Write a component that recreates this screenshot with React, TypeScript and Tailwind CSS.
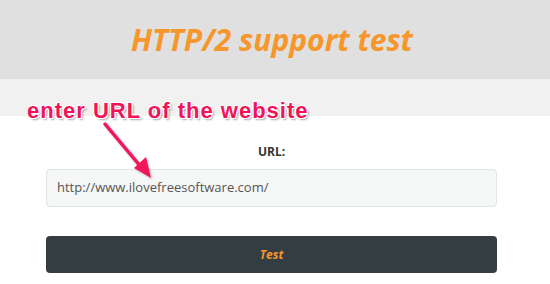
export default function App() {
  return (
    <div className="relative h-[284px] w-[550px] overflow-hidden bg-white font-['Open_Sans',sans-serif]">
      {/* header band */}
      <div className="flex h-[79px] items-center bg-[#e0e0e0] pl-[131px]">
        <h1 className="text-[30px] leading-none font-bold italic text-[#f7962a]">HTTP/2 support test</h1>
      </div>
      <div className="h-[37px] bg-[#f1f1f1]" />

      {/* form */}
      <div className="ml-[46px] w-[451px] pt-[27px]">
        <div className="text-center text-[12px] leading-[17px] font-bold text-[#333]">URL:</div>
        <div className="mt-[9px] flex h-[38px] items-center rounded-[4px] border border-[#e3e5e5] bg-[#f5f6f6] px-[10px] text-[13px] text-[#555]">
          http://www.ilovefreesoftware.com/
        </div>
        <button className="mt-[29px] flex h-[37px] w-full items-center justify-center rounded-[4px] bg-[#343d42] text-[12px] font-bold italic text-[#f7962a]">
          Test
        </button>
      </div>

      {/* annotation overlay */}
      <div className="absolute top-[98px] left-[27px] font-['Liberation_Sans',sans-serif] text-[22px] leading-[26px] font-bold tracking-[1px] text-[#f2135a] [text-shadow:-1px_-1px_0_#fff,1px_-1px_0_#fff,-1px_1px_0_#fff,1px_1px_0_#fff,2px_2px_2px_rgba(0,0,0,0.35)]">
        enter URL of the website
      </div>
      <svg className="absolute top-0 left-0" width="550" height="284" viewBox="0 0 550 284">
        <defs>
          <filter id="sh" x="-20%" y="-20%" width="140%" height="140%">
            <feDropShadow dx="1" dy="1" stdDeviation="1" floodColor="#000" floodOpacity="0.3" />
          </filter>
        </defs>
        <g filter="url(#sh)">
          <line x1="105" y1="124" x2="141" y2="167" stroke="#f2135a" strokeWidth="3.5" strokeLinecap="round" />
          <polygon points="151,178 134,168 146,157" fill="#f2135a" />
        </g>
      </svg>
    </div>
  )
}
